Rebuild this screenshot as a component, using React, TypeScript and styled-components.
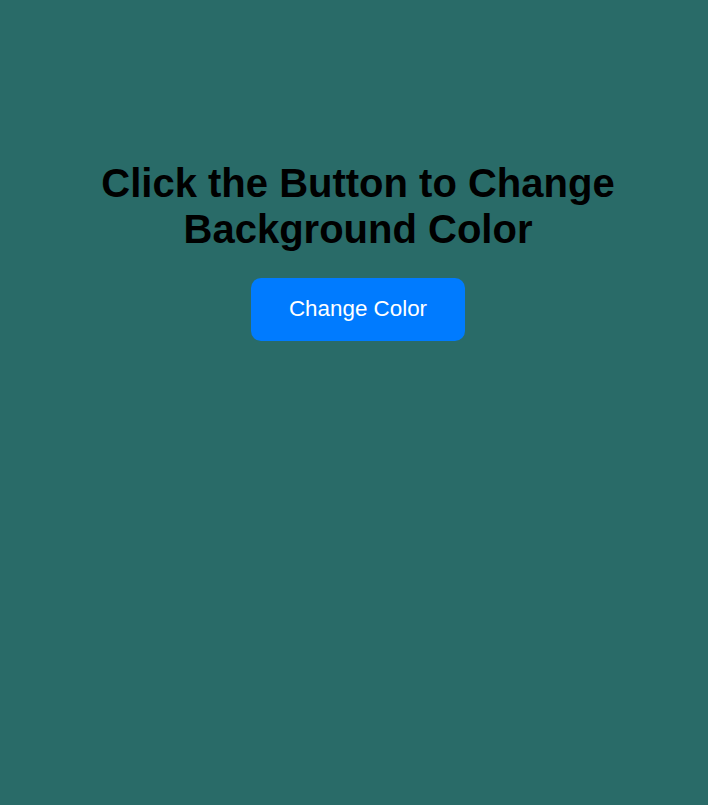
import React, { useState } from "react";
import styled, { createGlobalStyle } from "styled-components";

const colors = ["#296b68", "#6b2950", "#29436b", "#6b5a29"];

const Global = createGlobalStyle<{ $bg: string }>`
  html, body {
    margin: 0;
    padding: 0;
    background: ${(p) => p.$bg};
    min-height: 100%;
  }
  body {
    font-family: "Liberation Sans", Arial, sans-serif;
  }
`;

const Page = styled.main`
  min-height: 805px;
  display: flex;
  flex-direction: column;
  align-items: center;
  padding: 160px 0 0 8px;
  box-sizing: border-box;
`;

const Title = styled.h1`
  margin: 0 0 26px;
  max-width: 600px;
  text-align: center;
  font-size: 40px;
  line-height: 46px;
  font-weight: 700;
  color: #000;
`;

const Button = styled.button`
  font-family: "Liberation Sans", Arial, sans-serif;
  font-size: 22.4px;
  line-height: 26px;
  color: #fff;
  background: #007bff;
  border: none;
  border-radius: 10px;
  padding: 18px 38px 19px;
  cursor: pointer;
`;

export default function App() {
  const [i, setI] = useState(0);
  return (
    <>
      <Global $bg={colors[i]} />
      <Page>
        <Title>Click the Button to Change Background Color</Title>
        <Button onClick={() => setI((i + 1) % colors.length)}>Change Color</Button>
      </Page>
    </>
  );
}
